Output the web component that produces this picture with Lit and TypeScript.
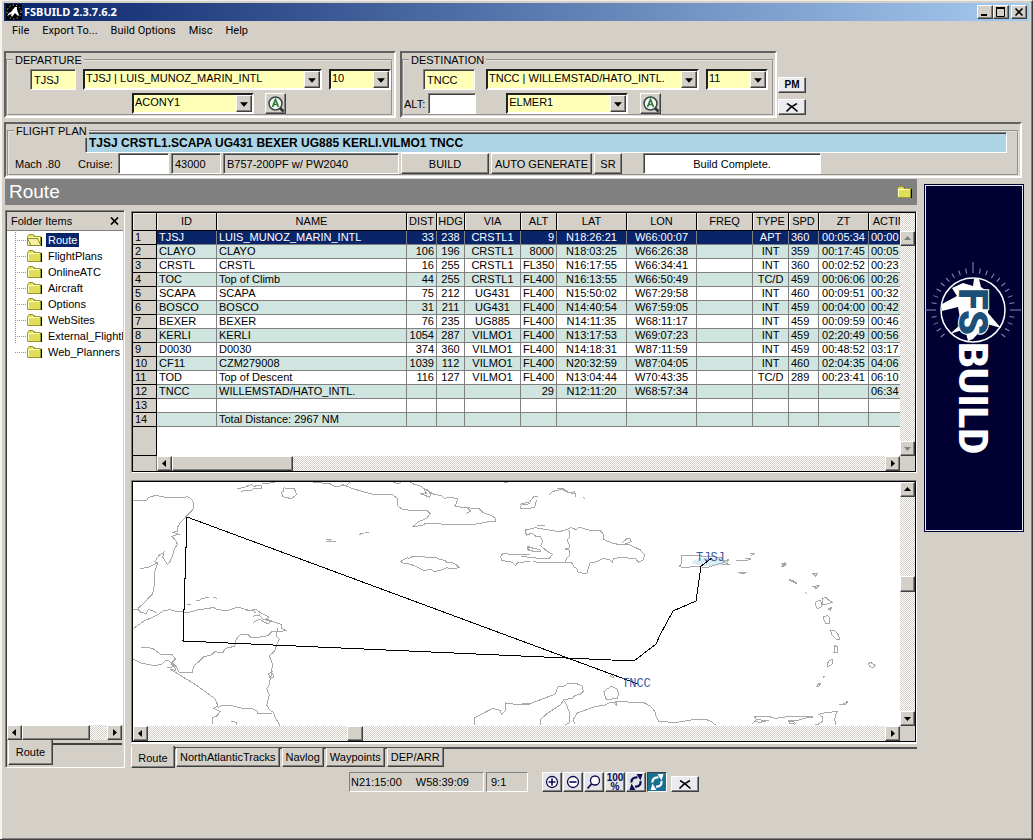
import { LitElement, html, css, svg, nothing } from "lit";
import { customElement } from "lit/decorators.js";
import { classMap } from "lit/directives/class-map.js";

type Column = { label: string; width: number; align: "left" | "center" | "right" };

const COLUMNS: Column[] = [
  { label: "ID", width: 60, align: "left" },
  { label: "NAME", width: 190, align: "left" },
  { label: "DIST", width: 30, align: "right" },
  { label: "HDG", width: 28, align: "center" },
  { label: "VIA", width: 56, align: "center" },
  { label: "ALT", width: 36, align: "right" },
  { label: "LAT", width: 70, align: "center" },
  { label: "LON", width: 70, align: "center" },
  { label: "FREQ", width: 56, align: "center" },
  { label: "TYPE", width: 36, align: "center" },
  { label: "SPD", width: 30, align: "left" },
  { label: "ZT", width: 50, align: "center" },
  { label: "ACTIME", width: 50, align: "left" },
];

const ROWS: string[][] = [
  ["TJSJ", "LUIS_MUNOZ_MARIN_INTL", "33", "238", "CRSTL1", "9", "N18:26:21", "W66:00:07", "", "APT", "360", "00:05:34", "00:00"],
  ["CLAYO", "CLAYO", "106", "196", "CRSTL1", "8000", "N18:03:25", "W66:26:38", "", "INT", "359", "00:17:45", "00:05"],
  ["CRSTL", "CRSTL", "16", "255", "CRSTL1", "FL350", "N16:17:55", "W66:34:41", "", "INT", "360", "00:02:52", "00:23"],
  ["TOC", "Top of Climb", "44", "255", "CRSTL1", "FL400", "N16:13:55", "W66:50:49", "", "TC/D", "459", "00:06:06", "00:26"],
  ["SCAPA", "SCAPA", "75", "212", "UG431", "FL400", "N15:50:02", "W67:29:58", "", "INT", "460", "00:09:51", "00:32"],
  ["BOSCO", "BOSCO", "31", "211", "UG431", "FL400", "N14:40:54", "W67:59:05", "", "INT", "459", "00:04:00", "00:42"],
  ["BEXER", "BEXER", "76", "235", "UG885", "FL400", "N14:11:35", "W68:11:17", "", "INT", "459", "00:09:59", "00:46"],
  ["KERLI", "KERLI", "1054", "287", "VILMO1", "FL400", "N13:17:53", "W69:07:23", "", "INT", "459", "02:20:49", "00:56"],
  ["D0030", "D0030", "374", "360", "VILMO1", "FL400", "N14:18:31", "W87:11:59", "", "INT", "459", "00:48:52", "03:17"],
  ["CF11", "CZM279008", "1039", "112", "VILMO1", "FL400", "N20:32:59", "W87:04:05", "", "INT", "460", "02:04:35", "04:06"],
  ["TOD", "Top of Descent", "116", "127", "VILMO1", "FL400", "N13:04:44", "W70:43:35", "", "TC/D", "289", "00:23:41", "06:10"],
  ["TNCC", "WILLEMSTAD/HATO_INTL.", "", "", "", "29", "N12:11:20", "W68:57:34", "", "", "", "", "06:34"],
  ["", "", "", "", "", "", "", "", "", "", "", "", ""],
  ["", "Total Distance: 2967 NM", "", "", "", "", "", "", "", "", "", "", ""],
];

const FOLDERS = ["Route", "FlightPlans", "OnlineATC", "Aircraft", "Options", "WebSites", "External_FlightP", "Web_Planners"];
const TABS = ["Route", "NorthAtlanticTracks", "Navlog", "Waypoints", "DEP/ARR"];
const MENUS = ["File", "Export To...", "Build Options", "Misc", "Help"];

const ARROWS = {
  left: "M5 0v7L1 3.500z",
  right: "M2 0v7L6 3.500z",
  up: "M0 5h7L3.500 1z",
  down: "M0 2h7L3.500 6z",
};

const folderIcon = (open: boolean) => html`<svg class="folder" viewBox="0 0 16 14" width="16" height="14" aria-hidden="true">
  <path d="M1.500 13V4L3 2h4l1.500 2H15v9z" fill="#000"></path>
  <path d="M.5 12.500v-9L2 1.500h4l1.500 2h6v9z" fill="#dede58" stroke="#9a9a2a"></path>
  <path d="M1.500 4.500v7M1.500 4.500h11" stroke="#ffffc0" fill="none"></path>
  ${open ? svg`<path d="M.5 5.500h10l3.500 7H4z" fill="#f2f2a0" stroke="#8a8a2a"></path><path d="M12.500 4v4" stroke="#fff"></path>` : nothing}
</svg>`;

const finderIcon = html`<svg viewBox="0 0 18 18" width="18" height="18" aria-hidden="true">
  <circle cx="8.500" cy="8.500" r="6.500" fill="#f4f8f4" stroke="#3a4a48" stroke-width="1.600"></circle>
  <path d="M5.500 12L8.500 4.500 11.500 12M6.500 9.500h4" fill="none" stroke="#2d7a3c" stroke-width="1.700"></path>
  <path d="M13 13L16.500 16.500" stroke="#333" stroke-width="2.600"></path>
</svg>`;

const crossIcon = html`<svg viewBox="0 0 14 9" width="14" height="9" aria-hidden="true">
  <path d="M2 0.500C5 2 9 5 12.500 8.500M12 0.500C8 2.500 4 5.500 1.500 8.500" fill="none" stroke="#000" stroke-width="1.500"></path>
</svg>`;

const swapIcon = (color: string) => svg`<g fill="none" stroke=${color} stroke-width="2.200">
    <path d="M3.500 8.500C3 5.500 5.500 3 9.500 3.500"></path><path d="M12.500 7c.5 3.500-1.500 6-5.500 5.500"></path>
  </g>
  <path d="M8.500 0L14.500 0 12.500 6.500z" fill=${color}></path><path d="M7.500 16L1.500 16 3.500 9.500z" fill=${color}></path>`;

/* Coastlines of the western Caribbean. */
const WEST_COAST = [
  "M8 76h42l5-8 22-7 30 6 55 2 10-5 12 8 7 12-2 20-20 20-20 22-7 12 2 10-14 4 16 6-20 6 12 14 4 10-10 16-4 18-10 22-6 4-14-22 4-14-14 8-14 20 6 4-28 14-22 2",
  "M84 262L74 290l0 36-6 30-26 28-16 14 2 12 20 6 6-12 12 2 16 8M8 402l22 4M8 462l34-24 40-18 18-12 20-4 22 6 34 2 30-8 46-6 6 4 28 6 40-12 26 10 28-2 12 10 26 12-10 6 22 8 24 8 2 12 10 6-14 4-26 0-12 12-24 4-26 2-10-10-24 2-12 14-4 20-28 6-8 14-24-4-10 10-24 6-16 16-14 12-2 18-40 0-8-16-14-14 10-10-10-14-34 0-24-18-36-4",
  "M8 552l24 12 42 8 22-4 10-12 12 2 16 20M112 578l28-4-4 12-16-4 26 16 52 32 36 26 20 14 10 22-12 8 18 10-8 12-14 6 0 20M264 698l10-6 32 0 30 8 32 2 16 8 0 6 42-2",
  "M444 458l-6 24 10 12-8 14-6 20-16 14 10 26-4 24 8 14-12 2-4-12 10-6-10 44-6 6 8 20-8 30 8 14 12 8 6 16 14 24",
  "M368 424l20-4 10 12 24 8-8 6-14-6-10-8-20 10M348 404l24 4 4 6M302 742l8-4 8 4 2 8",
  "M322 42l24-6 18-8 6 6 26-4 0 10-26 2-10 6-14-2-14 4M396 26l38-3M462 38l12 4 18-3 8 20-16 12-26-6-3-14 6-3z",
  "M550 22l50 4 14 8 36-2 8-10M636 28l30 12 40 12 32 8 48-2 16 12 0 22 16 12 34 2 40 2 8 8-10 14-24 10-16 14 26-2 8-5 46 0 98 2 44-8 26-2 0-8-14-10-24-8-12-12-54-4-20-4 6-8 2-14-18-4-10 0-10 4-10-10-20-2-26-14-20-14-14-2-18-10-16-4-22-8-20-12",
  "M790 22l16 4 6-4M870 56l20 0-8-14 10 2 10 14-4 8zM1008 96l14 12-14 8M1122 24l12 0",
  "M588 194l14 0-8 6 24-2M588 200l26 0M688 178l14-4M706 174l12-2M198 376l12 0 4-6 24-2M248 366l12 4M172 390h10M240 398l14 0",
  "M812 258l20-10 6 2 10-6 36 2 36 2 8 4 16 4 6 6 20 2 10 6 8 8-26 4-12-4-12 6-26 6-8-6-24 2-26-14-20-6-16-2z",
  "M1200 240l-60-2-20-4-8 10 2 12 34 6 8 10 8-10 36-2M1200 86l-24 4-6 6 8 6 22 0M1200 162l-14 2 0 12 14 4M1200 214l-8 8 8 6",
  "M1034 750v-22l54-28 22 6 4 12 14-12 0-22 28 4 44-2",
].join("");

/* Coastlines of Hispaniola, the Lesser Antilles and northern Venezuela. */
const EAST_COAST = [
  "M0 88l14-4 16-4 10-14 14 0M50 74l-6 22-20 6-24-2M88 60l6-8 14-6 20-2 16 8 24 6M112 40l16 0 20 14 16-4 4 16M190 66l4 6",
  "M2 244l40 4 26 4 20-2 10-12-18-10-18-16 6-12-6-14-14-2-14-10-14 6-4-14 30-8 46 8 26 4 20-6 16-6 14 6 10-8 24 8 22 4 18 0 10 12 0 14 24 10 18 4 6 2 30 0 30 14 14 16-4 14-14 8-10-12-44-2-22 2-2 12-10-8-18-4-20 10-20 4-10 32-26-4-2-10-10-6-8-14-72 2-44-4M146 164l4 20-8 12 8 16-4 8-12 2 16 4 0 14-10 10-6 14M24 214l16 6 20 4 2 6-20 0-18-8zM50 152h24M306 204l14-12 10 0 4 8-22 8",
  "M484 242l40 0 40 2 40 4 10 14-24 6-30 10-28-4-44 4-10-4 8-10-2-12zM604 258l22-4-8 10 8 4-20 2M648 256l30 2 14-6-18 0M690 234l12 2-10 6 10-4M654 292l26 0-12 4zM272 594l10 14-10-4 2-8",
  "M784 266l14 0-8 8 4-12-8 12 10-2zM806 314l12 2 14 10-12-4zM880 296l12 0-4 8zM878 334l18-2-8 8zM854 352l6 4M888 380l12-4 6 10-4 12-10 2-6-10zM908 370l10-2 8 8 10 6-18 6-12 0zM924 402l10-4-2 8zM910 424l14-2 6 10-2 14-10 0-6-12zM932 466l14 2 8 10 6 16-12-2-14-14zM944 512l10 4-2 16-10 0zM928 556l10-2-2 14-14 8 0-10zM908 608l6-4M888 636l8-10 6 0-8 10zM1046 566l6-4 14 10-6 6-12-4zM956 690l16-4 12-8-6 10-18 2",
  "M0 690l26-1 16-8 22-8 42-16 8-22 18-2 10-6 26-2 18 8 4 16-10 10-16 2-6 10-26 2-10 16-40 26-20 18 0 16M130 674l8 12 12 30 0 26-14 8M164 748l-4-14 12-20 38-14 20-6 26-4 14-8 20 0 0 10-10-10 24-4 26 4 40 0 22 12 16 20 0 8 8 18 56 2 46-8 42 0 14 6 12 10M256 668l-4-18 10-8 12-8 18 8 4 16-4 12-30 4z",
  "M696 746l14-12-6-8 40-2 22 6 30-4 84 0-30 4-14 6-30 2 4 6 16 4M710 732l18 4 20 0-28 6-14-2M808 748l0-10 14 2 4 6M884 748l10 0 12-8 2-14-12-8 26-6 30-2-6 12-2 12 4 16",
].join("");

const base = css`
  * { box-sizing: border-box; }
  button, input, select { font: inherit; color: inherit; margin: 0; border-radius: 0; outline: none; }
  .raised {
    background: #d4d0c8;
    border: 1px solid;
    border-color: #fff #404040 #404040 #fff;
    box-shadow: inset -1px -1px #808080;
    padding: 0;
    display: flex;
    align-items: center;
    justify-content: center;
  }
  .sunken {
    border: 1px solid;
    border-color: #808080 #fff #fff #808080;
    box-shadow: inset 1px 1px #404040;
  }
`;

@customElement("scroll-bar")
export class ScrollBar extends LitElement {
  static properties = {
    vertical: { type: Boolean, reflect: true },
    disabled: { type: Boolean },
    before: { type: Number },
    thumb: { type: Number },
  };
  declare vertical: boolean;
  declare disabled: boolean;
  declare before: number;
  declare thumb: number;

  static styles = [base, css`
    :host {
      display: flex;
      flex: 1;
      min-width: 0;
      height: 15px;
      background: repeating-conic-gradient(#fff 0 25%, #d4d0c8 0 50%) 0 0 / 2px 2px;
    }
    :host([vertical]) { flex-direction: column; width: 15px; height: auto; }
    .end { flex: none; width: 15px; height: 15px; }
    .track { flex: 1; display: flex; flex-direction: inherit; min-width: 0; min-height: 0; }
    .thumb { flex: none; }
  `];

  render() {
    const fill = this.disabled ? "#808080" : "#000";
    const arrow = (d: string) => html`<svg viewBox="0 0 7 7" width="7" height="7" aria-hidden="true"><path d=${d} fill=${fill}></path></svg>`;
    const axis = this.vertical ? "height" : "width";
    return html`
      <button class="raised end" aria-label="Scroll back" ?disabled=${this.disabled}>${arrow(this.vertical ? ARROWS.up : ARROWS.left)}</button>
      <div class="track">
        ${this.thumb
          ? html`<div style="flex:none;${axis}:${this.before}%"></div><div class="raised thumb" style="${axis}:${this.thumb}%"></div>`
          : nothing}
      </div>
      <button class="raised end" aria-label="Scroll forward" ?disabled=${this.disabled}>${arrow(this.vertical ? ARROWS.down : ARROWS.right)}</button>
    `;
  }
}

@customElement("combo-box")
export class ComboBox extends LitElement {
  static properties = { value: { type: String }, label: { type: String } };
  declare value: string;
  declare label: string;

  static styles = [base, css`
    :host { display: grid; height: 21px; font: 11px/14px "Liberation Sans", Arial, sans-serif; }
    select {
      grid-area: 1 / 1;
      width: 100%;
      min-width: 0;
      height: 21px;
      appearance: none;
      background: #ffffb8;
      padding: 0 0 3px 1px;
      border: 2px solid;
      border-color: #202020 #fff #fff #202020;
    }
    .arrow {
      grid-area: 1 / 1;
      justify-self: end;
      align-self: center;
      width: 16px;
      height: 17px;
      margin-right: 2px;
      pointer-events: none;
    }
  `];

  render() {
    return html`
      <select aria-label=${this.label}><option>${this.value}</option></select>
      <span class="raised arrow"><svg viewBox="0 0 7 7" width="8" height="8" aria-hidden="true"><path d=${ARROWS.down} fill="#000"></path></svg></span>
    `;
  }
}

@customElement("route-grid")
export class RouteGrid extends LitElement {
  static styles = [base, css`
    :host {
      display: grid;
      grid-template-columns: minmax(0, 1fr) 15px;
      border: 1px solid #000;
      font: 11px/13px "Liberation Sans", Arial, sans-serif;
      background: #fff;
    }
    .cells { overflow: hidden; display: flex; flex-direction: column; }
    table { table-layout: fixed; width: 786px; border-spacing: 0; }
    th, td { padding: 0; overflow: hidden; white-space: nowrap; font-weight: normal; }
    thead th { height: 18px; background: #d4d0c8; border: solid #000; border-width: 0 1px 1px 0; box-shadow: inset 1px 1px #f4f2ee; }
    tbody th { height: 14px; background: #d4d0c8; border: solid #000; border-width: 0 1px 1px 0; text-align: left; padding-left: 2px; }
    td { height: 14px; border: solid #808080; border-width: 0 1px 1px 0; padding: 0 2px; }
    .left { text-align: left; }
    .center { text-align: center; padding: 0; }
    .right { text-align: right; }
    .even td { background: #d0e4e0; }
    .current td { background: #0a246a; color: #fff; }
    .gutter { width: 24px; height: 29px; background: #d4d0c8; border: solid #000; border-width: 0 1px 1px 0; }
    .side { display: flex; flex-direction: column; background: repeating-conic-gradient(#fff 0 25%, #d4d0c8 0 50%) 0 0 / 2px 2px; padding-top: 18px; }
    .foot { grid-column: 1 / -1; display: flex; }
    .block { width: 24px; background: #d4d0c8; border-right: 1px solid #808080; }
    .corner { width: 15px; background: #d4d0c8; }
  `];

  render() {
    return html`
      <div class="cells">
        <table>
          <colgroup><col style="width:24px">${COLUMNS.map((c) => html`<col style="width:${c.width}px">`)}</colgroup>
          <thead><tr><th></th>${COLUMNS.map((c) => html`<th scope="col">${c.label}</th>`)}</tr></thead>
          <tbody>
            ${ROWS.map((row, r) => html`<tr class=${classMap({ current: r === 0, even: r % 2 === 1 })}>
              <th scope="row">${r + 1}</th>
              ${row.map((cell, i) => html`<td class=${COLUMNS[i].align}>${cell}</td>`)}
            </tr>`)}
          </tbody>
        </table>
        <div class="gutter"></div>
      </div>
      <div class="side"><scroll-bar vertical disabled></scroll-bar></div>
      <div class="foot">
        <div class="block"></div>
        <scroll-bar .before=${0} .thumb=${17}></scroll-bar>
        <div class="corner"></div>
      </div>
    `;
  }
}

@customElement("route-map")
export class RouteMap extends LitElement {
  static styles = [base, css`
    :host {
      display: grid;
      grid-template-columns: minmax(0, 1fr) 15px;
      border: 1px solid #000;
      background: #fff;
    }
    .chart { display: block; width: 100%; height: 244px; }
    .coast { fill: none; stroke: #a8a8a8; stroke-width: 1; vector-effect: non-scaling-stroke; shape-rendering: crispEdges; }
    .track { fill: none; stroke: #000; stroke-width: 1; shape-rendering: crispEdges; }
    .place { fill: #3a5aa8; font: 12px "Liberation Mono", "Courier New", monospace; }
    .water { fill: #d8eef4; }
    .side { display: flex; }
    .foot { grid-column: 1 / -1; display: flex; }
    .corner { width: 15px; background: #d4d0c8; }
  `];

  render() {
    return html`
      <svg class="chart" viewBox="0 0 765 244" preserveAspectRatio="xMinYMin meet" role="img" aria-label="Route map">
        <ellipse class="water" cx="577" cy="80" rx="18" ry="4"></ellipse>
        <g transform="translate(-3 -7) scale(.33333)"><path class="coast" d=${WEST_COAST}></path></g>
        <g transform="translate(387 -7) scale(.33333)"><path class="coast" d=${EAST_COAST}></path></g>
        <polyline class="track" points="579,76 568,84 563,119 540,129 527,153 523,162 501,179 50,159 54,35 505,202"></polyline>
        <text class="place" x="563" y="79">TJSJ</text>
        <text class="place" x="489" y="205">TNCC</text>
      </svg>
      <div class="side"><scroll-bar vertical .before=${37} .thumb=${7.5}></scroll-bar></div>
      <div class="foot">
        <scroll-bar .before=${27} .thumb=${2.2}></scroll-bar>
        <div class="corner"></div>
      </div>
    `;
  }
}

@customElement("brand-panel")
export class BrandPanel extends LitElement {
  static styles = css`
    :host { display: block; background: #000033; border: 1px solid #000033; box-shadow: inset 0 0 0 1px #e8e8f0; }
    svg { display: block; width: 100%; }
    .build { font: 900 40px Roboto, "Liberation Sans", sans-serif; fill: #fff; }
    .fs { font: 900 40px Roboto, "Liberation Sans", sans-serif; fill: #1c5078; stroke: #fff; stroke-width: 2; paint-order: stroke; }
  `;

  render() {
    const rays = Array.from({ length: 36 }, (_, i) => i).filter((i) => i < 14 || i > 22);
    return html`<svg viewBox="0 0 98 346" role="img" aria-label="FSBUILD">
      ${rays.map((i) => svg`<path d="M0 -37V${i % 9 === 0 ? -48 : -42}" transform="translate(48 125) rotate(${i * 10})" stroke="#8c8cb4" stroke-width="1"></path>`)}
      <circle cx="48" cy="125" r="32" fill="#000033" stroke="#fff" stroke-width="1.500"></circle>
      <path d="M49 94L54 94 56 102 63 107 63 128 76 143 62 139 48 154 43 156 40 144 25 149 36 139 33 122 17 126 17 119 32 111 27 103 38 98 48 101z" fill="#fff"></path>
      <text class="build" transform="translate(34 157) rotate(90)">BUILD</text>
      <text class="fs" transform="translate(34 103) rotate(90)">FS</text>
    </svg>`;
  }
}

@customElement("app-root")
export class AppRoot extends LitElement {
  static styles = [base, css`
    :host {
      display: flex;
      flex-direction: column;
      box-sizing: border-box;
      min-height: 100vh;
      background: #d4d0c8;
      color: #000;
      font: 11px/14px "Liberation Sans", Arial, sans-serif;
      border: solid;
      border-width: 1px 1px 1px 0;
      border-color: #f0eee8 #404040 #404040 #f0eee8;
      box-shadow: inset 2px 0 #f6f4f0, inset -1px -1px #808080;
      padding: 2px 3px 3px 4px;
    }
    .titlebar {
      display: flex;
      align-items: center;
      height: 18px;
      padding: 0 2px;
      background: linear-gradient(90deg, #0a246a, #a6caf0);
      color: #fff;
      font: bold 11px/18px "Noto Sans", sans-serif;
      gap: 2px;
    }
    .title { flex: 1; margin: 0; font: inherit; }
    .winbuttons { display: flex; }
    .winbuttons button { width: 16px; height: 14px; }
    .winbuttons button:last-child { margin-left: 2px; }
    .menu { display: flex; height: 20px; padding-left: 8px; gap: 13px; font: 11px/20px Roboto, sans-serif; }
    .menu button { background: none; border: 0; padding: 0; }
    .airports { display: flex; gap: 4px; margin-top: 10px; }
    .panel { border: 2px solid; border-color: #606060 #fff #fff #606060; padding: 6px 1px 0 0; }
    .departure { width: 392px; }
    .destination { width: 377px; }
    fieldset { position: relative; margin: 0; padding: 8px 0 0; border: 2px groove #e4e2dc; min-width: 0; height: 57px; }
    legend { position: absolute; top: -8px; left: 5px; padding: 0 2px; background: #d4d0c8; line-height: 14px; }
    .row { display: flex; margin-bottom: 3px; }
    .dep1 { padding-left: 22px; gap: 7px; }
    .dep2 { padding-left: 124px; gap: 11px; }
    .dst1 { padding-left: 19px; gap: 7px; }
    .dst2 { gap: 12px; }
    .field { height: 21px; min-width: 0; padding: 0 3px; background: #fff; }
    .yellow { background: #ffffb8; }
    .code { width: 46px; }
    .code.wide { width: 52px; margin-right: 4px; }
    .alt { display: flex; align-items: center; gap: 3px; margin-right: 18px; }
    .alt .field { width: 48px; }
    .airport { width: 239px; }
    .airport.narrow { width: 213px; }
    .runway { width: 62px; }
    .procedure { width: 122px; }
    .find { width: 21px; height: 21px; }
    .side { display: flex; flex-direction: column; gap: 6px; padding-top: 26px; margin-left: -3px; }
    .side button, .wide-x { width: 28px; height: 16px; background: #ececf0; }
    .wide-x { align-self: flex-end; margin-left: 4px; }
    .pm { font-weight: bold; font-size: 10px; }
    .plan { margin: 4px 7px 0 0; padding: 6px 1px 0 1px; }
    .plan fieldset { padding: 0; height: 46px; }
    .plan legend { top: -8px; left: 5px; }
    .routeline { padding: 0 10px 0 76px; margin: 0; }
    .routetext { flex: 1; background: #add4e4; font-weight: bold; font-size: 12px; }
    .details { align-items: center; padding-left: 6px; gap: 2px; margin: 0; }
    .mach { width: 61px; }
    .cruise { width: 38px; }
    .level { width: 51px; }
    .readout { height: 21px; padding: 0 3px; display: flex; align-items: center; white-space: nowrap; }
    .max { width: 50px; }
    .type { width: 176px; }
    .build { width: 88px; height: 21px; }
    .auto { width: 101px; height: 21px; white-space: nowrap; }
    .sr { width: 28px; height: 21px; }
    .result { width: 178px; margin-left: 19px; background: #fff; justify-content: center; }
    .main { display: flex; align-items: flex-start; gap: 7px; padding: 1px 5px 0 1px; }
    .primary { flex: 1; min-width: 0; }
    .heading { display: flex; align-items: center; justify-content: space-between; height: 26px; padding: 0 4px; background: #808080; color: #fff; }
    .heading h2 { margin: 0; font-size: 19px; line-height: 26px; font-weight: normal; }
    .work { display: flex; gap: 6px; padding-top: 5px; }
    .tree { width: 120px; flex: none; display: flex; flex-direction: column; border: 1px solid; border-color: #808080 #fff #fff #808080; box-shadow: inset 1px 1px #404040; padding: 1px; }
    .treehead { display: flex; align-items: center; justify-content: space-between; height: 19px; padding: 0 4px; border-bottom: 1px solid #808080; }
    .treehead button { border: 0; background: none; padding: 0; display: flex; }
    .items { flex: 1; background: #fff; margin: 0; padding: 1px 0 0 8px; list-style: none; overflow: hidden; }
    .items li { display: flex; align-items: center; height: 16px; white-space: nowrap;
      background:
        linear-gradient(90deg, #909090 50%, transparent 0) 0 8px / 2px 1px repeat-x,
        linear-gradient(#909090 50%, transparent 0) 0 0 / 1px 2px repeat-y; }
    .items li:last-child { background: linear-gradient(90deg, #909090 50%, transparent 0) 0 8px / 2px 1px repeat-x; }
    .items .node { display: flex; align-items: center; gap: 3px; background: #fff; margin-left: 12px; flex: 1; min-width: 0; }
    .items .folder { flex: none; }
    .items a { color: #000; text-decoration: none; padding: 0 2px; line-height: 14px; min-width: 0; overflow: hidden; }
    .items a.selected { background: #0a246a; color: #fff; }
    .treebar { display: flex; padding-right: 1px; }
    .treetabs { display: flex; height: 26px; }
    .treetabs button { width: 45px; height: 25px; margin-left: 1px; border-top: 0; }
    .treetabs .rest { flex: 1; height: 5px; border-bottom: 2px solid #404040; margin-right: 1px; }
    .content { flex: 1; min-width: 0; display: flex; flex-direction: column; }
    .frame { border: 1px solid; border-color: #808080 #fff #fff #808080; }
    .frame.grid { margin-top: 1px; }
    .frame.map { margin-top: 7px; }
    .tabs { display: flex; gap: 2px; align-items: flex-start; border-top: 1px solid #fff; height: 25px; padding-top: 2px;
      background: linear-gradient(#505050, #505050) 44px 3px / 100% 2px no-repeat; }
    .tabs button { height: 19px; padding: 0 3px; margin-top: 2px; border-top: 0; white-space: nowrap; }
    .tabs button.active { height: 22px; width: 44px; padding-top: 3px; margin: 0 -1px 0 0; }
    .brand { width: 100px; flex: none; margin-top: 5px; }
    .status { display: flex; justify-content: center; align-items: center; padding-left: 126px; margin-top: 4px; }
    .box { height: 20px; padding: 1px 0 0 1px; border: 1px solid; border-color: #808080 #fff #fff #808080; line-height: 16px; white-space: pre; }
    .position { width: 135px; margin-right: 2px; }
    .coords { display: flex; gap: 14px; }
    .scale { width: 42px; padding-left: 4px; margin-right: 14px; }
    .tools { display: flex; gap: 1px; }
    .tools button { width: 20px; height: 20px; background: #e4e4e8; }
    .tools .percent { flex-direction: column; font: bold 10px/9px "Liberation Sans", Arial, sans-serif; color: #0a0a50; }
    .tools .on { background: #1a7090; border-color: #404040 #fff #fff #404040; box-shadow: none; }
  `];

  render() {
    return html`
      <header class="titlebar">
        <svg viewBox="0 0 16 16" width="16" height="16" aria-hidden="true">
          <rect width="16" height="16" fill="#000"></rect>
          <path d="M9 3l2 0 0 3 2 5-1 1-3-3-3 4-1-2 1-1-4 1 0-1 3-2z" fill="#fff"></path>
          <circle cx="8" cy="8" r="7" fill="none" stroke="#fff" stroke-dasharray="1 2.500"></circle>
        </svg>
        <h1 class="title">FSBUILD 2.3.7.6.2</h1>
        <div class="winbuttons">
          <button class="raised" aria-label="Minimize"><svg viewBox="0 0 10 10" width="10" height="10"><path d="M1 8h6" stroke="#000" stroke-width="2"></path></svg></button>
          <button class="raised" aria-label="Maximize"><svg viewBox="0 0 10 10" width="10" height="10"><path d="M.5 1v8.500h8V1M0 1h9" fill="none" stroke="#000"></path><path d="M0 1h9" stroke="#000" stroke-width="2"></path></svg></button>
          <button class="raised" aria-label="Close"><svg viewBox="0 0 10 10" width="10" height="10"><path d="M1.500 1.500l7 7M8.500 1.500l-7 7" stroke="#000" stroke-width="1.600"></path></svg></button>
        </div>
      </header>
      <nav class="menu" aria-label="Main menu">${MENUS.map((m) => html`<button>${m}</button>`)}</nav>

      <div class="airports">
        <div class="panel departure">
          <fieldset>
            <legend>DEPARTURE</legend>
            <div class="row dep1">
              <input class="field sunken yellow code" aria-label="Departure code" value="TJSJ">
              <combo-box class="airport" label="Departure airport" value="TJSJ | LUIS_MUNOZ_MARIN_INTL"></combo-box>
              <combo-box class="runway" label="Departure runway" value="10"></combo-box>
            </div>
            <div class="row dep2">
              <combo-box class="procedure" label="Departure procedure" value="ACONY1"></combo-box>
              <button class="raised find" aria-label="Find departure">${finderIcon}</button>
            </div>
          </fieldset>
        </div>
        <div class="panel destination">
          <fieldset>
            <legend>DESTINATION</legend>
            <div class="row dst1">
              <input class="field sunken yellow code wide" aria-label="Destination code" value="TNCC">
              <combo-box class="airport narrow" label="Destination airport" value="TNCC | WILLEMSTAD/HATO_INTL."></combo-box>
              <combo-box class="runway" label="Destination runway" value="11"></combo-box>
            </div>
            <div class="row dst2">
              <label class="alt">ALT: <input class="field sunken"></label>
              <combo-box class="procedure" label="Arrival procedure" value="ELMER1"></combo-box>
              <button class="raised find" aria-label="Find destination">${finderIcon}</button>
            </div>
          </fieldset>
        </div>
        <div class="side">
          <button class="raised pm">PM</button>
          <button class="raised" aria-label="Clear">${crossIcon}</button>
        </div>
      </div>

      <div class="panel plan">
        <fieldset>
          <legend>FLIGHT PLAN</legend>
          <div class="row routeline">
            <input class="field sunken routetext" aria-label="Flight plan route" value="TJSJ CRSTL1.SCAPA UG431 BEXER UG885 KERLI.VILMO1 TNCC">
          </div>
          <div class="row details">
            <span class="mach">Mach .80</span>
            <label class="cruise" for="cruise">Cruise:</label>
            <input id="cruise" class="field sunken level">
            <span class="readout sunken max">43000</span>
            <span class="readout sunken type">B757-200PF w/ PW2040</span>
            <button class="raised build">BUILD</button>
            <button class="raised auto">AUTO GENERATE</button>
            <button class="raised sr">SR</button>
            <output class="readout sunken result">Build Complete.</output>
          </div>
        </fieldset>
      </div>

      <div class="main">
        <div class="primary">
          <div class="heading"><h2>Route</h2>${folderIcon(false)}</div>
          <div class="work">
            <aside class="tree">
              <div class="treehead"><span>Folder Items</span>
                <button aria-label="Close folder list"><svg viewBox="0 0 9 8" width="9" height="8"><path d="M1 .5l7 7M8 .5l-7 7" stroke="#000" stroke-width="1.700"></path></svg></button>
              </div>
              <ul class="items">
                ${FOLDERS.map((f, i) => html`<li><div class="node">${folderIcon(i === 0)}<a href="#" class=${classMap({ selected: i === 0 })}>${f}</a></div></li>`)}
              </ul>
              <div class="treebar"><scroll-bar .before=${0} .thumb=${80}></scroll-bar></div>
              <div class="treetabs"><button class="raised">Route</button><div class="rest"></div></div>
            </aside>
            <div class="content">
              <div class="frame grid"><route-grid></route-grid></div>
              <div class="frame map"><route-map></route-map></div>
              <nav class="tabs" aria-label="Views">${TABS.map((t, i) => html`<button class=${classMap({ raised: true, active: i === 0 })}>${t}</button>`)}</nav>
            </div>
          </div>
          <div class="status">
            <div class="box position"><div class="coords"><span>N21:15:00</span><span>W58:39:09</span></div></div>
            <div class="box scale">9:1</div>
            <div class="tools">
              <button class="raised" aria-label="Zoom in"><svg viewBox="0 0 16 16" width="16" height="16"><circle cx="8" cy="8" r="5.500" fill="#fff" stroke="#0a0a50" stroke-width="1.300"></circle><path d="M4.500 8h7M8 4.500v7" stroke="#0a0a50" stroke-width="1.600"></path></svg></button>
              <button class="raised" aria-label="Zoom out"><svg viewBox="0 0 16 16" width="16" height="16"><circle cx="8" cy="8" r="5.500" fill="#fff" stroke="#0a0a50" stroke-width="1.300"></circle><path d="M4.500 8h7" stroke="#0a0a50" stroke-width="1.600"></path></svg></button>
              <button class="raised" aria-label="Zoom window"><svg viewBox="0 0 16 16" width="16" height="16"><circle cx="9" cy="6.500" r="4.500" fill="#fff" stroke="#0a0a50" stroke-width="1.300"></circle><path d="M5.500 10L1.500 14.500" stroke="#0a0a50" stroke-width="1.800"></path></svg></button>
              <button class="raised percent"><span>100</span><span>%</span></button>
              <button class="raised" aria-label="Refresh"><svg viewBox="0 0 16 16" width="16" height="16">${swapIcon("#0a0a50")}</svg></button>
              <button class="raised on" aria-label="Auto refresh"><svg viewBox="0 0 16 16" width="16" height="16">${swapIcon("#fff")}</svg></button>
            </div>
            <button class="raised wide-x" aria-label="Clear map">${crossIcon}</button>
          </div>
        </div>
        <brand-panel class="brand"></brand-panel>
      </div>
    `;
  }
}
